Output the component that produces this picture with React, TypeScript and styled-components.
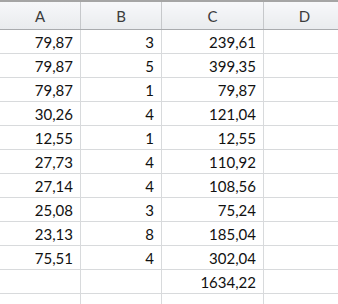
import React from 'react';
import styled, { createGlobalStyle } from 'styled-components';

const Global = createGlobalStyle`
  html, body { margin: 0; padding: 0; background: #fff; }
  body { font-family: Lato, "Liberation Sans", sans-serif; overflow: hidden; }
`;

const Sheet = styled.div`
  width: 338px;
  height: 304px;
  overflow: hidden;
  border-top: 2px solid #a5a5a5;
`;

const Grid = styled.table`
  border-collapse: collapse;
  table-layout: fixed;
  width: 342px;
`;

const Head = styled.th<{ $w: number }>`
  width: ${p => p.$w}px;
  height: 27px;
  padding: 0;
  font-weight: normal;
  font-size: 15px;
  color: #3c3c3c;
  text-align: center;
  background: linear-gradient(#f7f8fa, #e9ebee);
  border-right: 1px solid #c6c8cb;
  border-bottom: 1px solid #a9abae;
`;

const Cell = styled.td`
  height: 23px;
  padding: 0 7px 0 0;
  font-size: 15px;
  color: #111;
  text-align: right;
  border-right: 1px solid #d8dadc;
  border-bottom: 1px solid #d8dadc;
  white-space: nowrap;
`;

const rows: [string, string, string][] = [
  ['79,87', '3', '239,61'],
  ['79,87', '5', '399,35'],
  ['79,87', '1', '79,87'],
  ['30,26', '4', '121,04'],
  ['12,55', '1', '12,55'],
  ['27,73', '4', '110,92'],
  ['27,14', '4', '108,56'],
  ['25,08', '3', '75,24'],
  ['23,13', '8', '185,04'],
  ['75,51', '4', '302,04'],
  ['', '', '1634,22'],
  ['', '', ''],
];

export default function App() {
  return (
    <Sheet>
      <Global />
      <Grid>
        <thead>
          <tr>
            <Head $w={80}>A</Head>
            <Head $w={80}>B</Head>
            <Head $w={101}>C</Head>
            <Head $w={81}>D</Head>
          </tr>
        </thead>
        <tbody>
          {rows.map((r, i) => (
            <tr key={i}>
              <Cell>{r[0]}</Cell>
              <Cell>{r[1]}</Cell>
              <Cell>{r[2]}</Cell>
              <Cell />
            </tr>
          ))}
        </tbody>
      </Grid>
    </Sheet>
  );
}
